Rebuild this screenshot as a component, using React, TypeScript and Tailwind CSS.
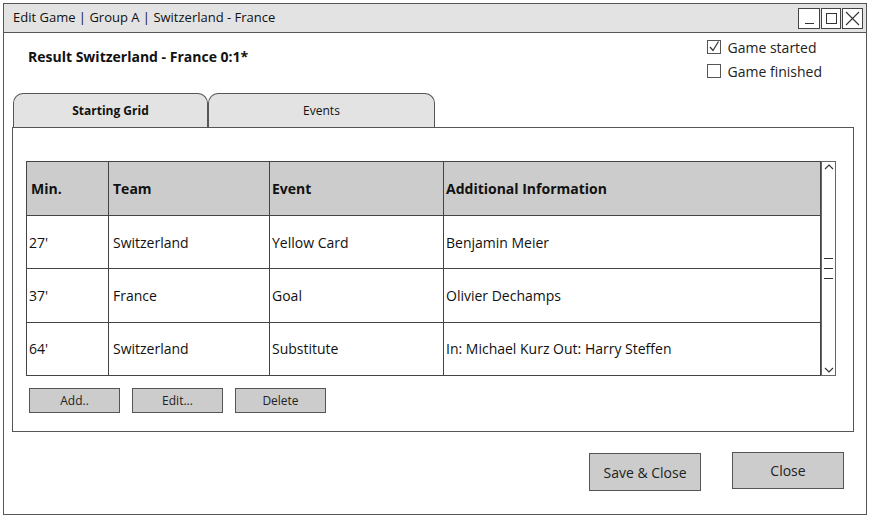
const font = { fontFamily: '"Comic Sans MS", "Open Sans", "DejaVu Sans", sans-serif' };

const rows = [
  { min: "27'", team: "Switzerland", event: "Yellow Card", info: "Benjamin Meier" },
  { min: "37'", team: "France", event: "Goal", info: "Olivier Dechamps" },
  { min: "64'", team: "Switzerland", event: "Substitute", info: "In: Michael Kurz Out: Harry Steffen" },
];

function Checkbox({ checked, label }: { checked: boolean; label: string }) {
  return (
    <div className="flex items-center gap-[7px] h-[24px]">
      <div className="w-[14px] h-[14px] border border-[#555] bg-white flex items-center justify-center">
        {checked && (
          <svg width="12" height="12" viewBox="0 0 12 12" fill="none" stroke="#333" strokeWidth="1.2">
            <path d="M2 6 L5 9.5 L10.5 0.5" />
          </svg>
        )}
      </div>
      <span className="text-[14px] text-[#222]">{label}</span>
    </div>
  );
}

function SmallButton({ label }: { label: string }) {
  return (
    <button className="w-[91px] h-[25px] bg-[#cccccc] border border-[#555] text-[12px] text-[#222] flex items-center justify-center">
      {label}
    </button>
  );
}

export default function App() {
  return (
    <div className="w-[870px] h-[517px] bg-white relative overflow-hidden" style={font}>
      <div className="absolute left-[3px] top-[3px] w-[864px] h-[512px] border border-[#555] flex flex-col">
        {/* title bar */}
        <div className="h-[29px] bg-[#e3e3e3] border-b border-[#555] flex items-center justify-between pl-[9px] pr-[3px]">
          <span className="text-[13px] text-[#111]">Edit Game | Group A | Switzerland - France</span>
          <div className="flex gap-[1px]">
            <div className="w-[22px] h-[21px] border border-[#444] bg-white flex items-end justify-center pb-[4px]">
              <div className="w-[9px] h-[1px] bg-[#333]" />
            </div>
            <div className="w-[20px] h-[21px] border border-[#444] bg-white flex items-center justify-center">
              <div className="w-[11px] h-[11px] border border-[#333]" />
            </div>
            <div className="w-[21px] h-[21px] border border-[#444] bg-white flex items-center justify-center">
              <svg width="15" height="15" viewBox="0 0 15 15" stroke="#333" strokeWidth="1.1">
                <path d="M1 1 L14 14 M14 1 L1 14" />
              </svg>
            </div>
          </div>
        </div>

        {/* header row */}
        <div className="flex justify-between h-[60px]">
          <div className="pl-[24px] pt-[13px] text-[14px] font-bold text-[#111]">Result Switzerland - France 0:1*</div>
          <div className="pr-[44px] pt-[2px] flex flex-col">
            <Checkbox checked label="Game started" />
            <Checkbox checked={false} label="Game finished" />
          </div>
        </div>

        {/* tabs */}
        <div className="flex pl-[9px] h-[34px]">
          <div className="w-[195px] h-[34px] bg-[#e3e3e3] border border-[#555] border-b-0 rounded-t-[10px] flex items-center justify-center text-[12px] font-bold text-[#111]">
            Starting Grid
          </div>
          <div className="w-[227px] h-[34px] bg-[#e3e3e3] border border-[#555] border-b-0 rounded-t-[10px] flex items-center justify-center text-[12px] text-[#111]">
            Events
          </div>
        </div>

        {/* panel */}
        <div className="ml-[8px] w-[842px] h-[305px] border border-[#555] flex flex-col pl-[13px] pt-[33px]">
          <div className="flex">
            <table className="w-[795px] border-collapse border border-[#444] text-[14px] text-[#111]">
              <thead>
                <tr className="bg-[#cccccc] h-[54px]">
                  <th className="w-[82px] border border-[#444] text-left font-bold pl-[4px]">Min.</th>
                  <th className="w-[161px] border border-[#444] text-left font-bold pl-[4px]">Team</th>
                  <th className="w-[174px] border border-[#444] text-left font-bold pl-[2px]">Event</th>
                  <th className="border border-[#444] text-left font-bold pl-[2px]">Additional Information</th>
                </tr>
              </thead>
              <tbody>
                {rows.map((r) => (
                  <tr key={r.min} className="h-[53px]">
                    <td className="border border-[#444] pl-[2px]">{r.min}</td>
                    <td className="border border-[#444] pl-[4px]">{r.team}</td>
                    <td className="border border-[#444] pl-[2px]">{r.event}</td>
                    <td className="border border-[#444] pl-[2px]">{r.info}</td>
                  </tr>
                ))}
              </tbody>
            </table>
            <div className="w-[15px] h-[215px] border border-[#666] bg-white flex flex-col items-center justify-between py-[1px]">
              <svg width="10" height="8" viewBox="0 0 10 8" fill="none" stroke="#333" strokeWidth="1.1">
                <path d="M1 6 L5 2 L9 6" />
              </svg>
              <div className="flex flex-col gap-[9px]">
                <div className="w-[9px] h-[1px] bg-[#333]" />
                <div className="w-[9px] h-[1px] bg-[#333]" />
                <div className="w-[9px] h-[1px] bg-[#333]" />
              </div>
              <svg width="10" height="8" viewBox="0 0 10 8" fill="none" stroke="#333" strokeWidth="1.1">
                <path d="M1 2 L5 6 L9 2" />
              </svg>
            </div>
          </div>
          <div className="flex gap-[12px] mt-[12px] pl-[3px]">
            <SmallButton label="Add.." />
            <SmallButton label="Edit..." />
            <SmallButton label="Delete" />
          </div>
        </div>

        {/* footer */}
        <div className="flex justify-end gap-[31px] pr-[22px] pt-[21px]">
          <button className="w-[112px] h-[38px] bg-[#cccccc] border border-[#555] text-[14px] text-[#222]">Save &amp; Close</button>
          <button className="w-[112px] h-[37px] bg-[#cccccc] border border-[#555] text-[14px] text-[#222] -mt-[1px]">Close</button>
        </div>
      </div>
    </div>
  );
}
